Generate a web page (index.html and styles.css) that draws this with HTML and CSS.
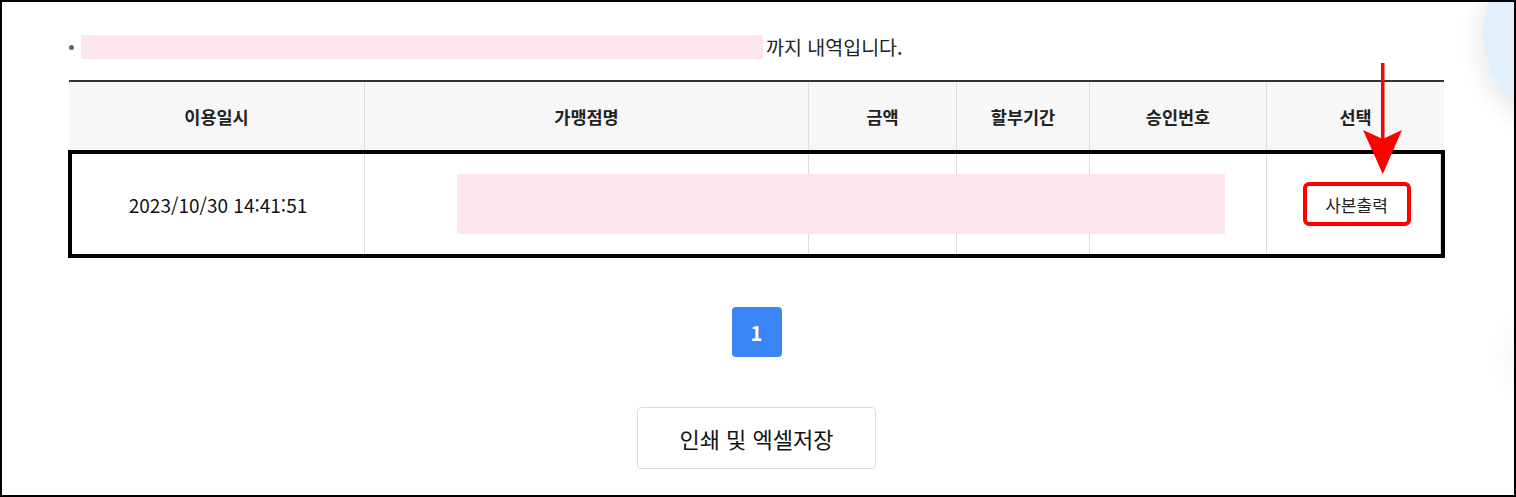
FILE: index.html
```html
<!DOCTYPE html>
<html lang="ko">
<head>
<meta charset="utf-8">
<link rel="stylesheet" href="styles.css">
</head>
<body>
<div class="frame">
  <div class="deco-circle"></div>
  <div class="deco-shadow"></div>
  <div class="page">
    <div class="notice">
      <span class="dot"></span>
      <span class="redact redact-line"></span>
      <span class="notice-text">까지 내역입니다.</span>
    </div>
    <div class="table">
      <div class="thead">
        <div class="th">이용일시</div>
        <div class="th">가맹점명</div>
        <div class="th">금액</div>
        <div class="th">할부기간</div>
        <div class="th">승인번호</div>
        <div class="th">선택</div>
      </div>
      <div class="trow">
        <div class="td">2023/10/30 14:41:51</div>
        <div class="td"></div>
        <div class="td"></div>
        <div class="td"></div>
        <div class="td"></div>
        <div class="td"><button class="copy-btn">사본출력</button></div>
        <span class="redact redact-cell"></span>
      </div>
    </div>
    <div class="pager"><span class="page-num">1</span></div>
    <div class="actions"><button class="print-btn">인쇄 및 엑셀저장</button></div>
  </div>
  <svg class="arrow" width="44" height="115" viewBox="0 0 44 115">
    <rect x="19" y="0" width="3.5" height="80" fill="#ff0000"/>
    <polygon points="1,67 20.75,76 40,67 20.75,111" fill="#ff0000"/>
  </svg>
</div>
</body>
</html>
```

FILE: styles.css
```css
* { box-sizing: border-box; }
html, body { margin: 0; padding: 0; background: #fff; }
body { font-family: "Noto Sans CJK KR", "Noto Sans", sans-serif; color: #222; }

.frame {
  position: relative;
  width: 1516px;
  height: 497px;
  border: 2px solid #000;
  overflow: hidden;
}

.deco-circle {
  position: absolute;
  left: 1481px;
  top: -64px;
  width: 190px;
  height: 190px;
  border-radius: 50%;
  background: #e1f0fa;
  box-shadow: -8px 8px 20px rgba(0,0,0,0.07);
}
.deco-shadow {
  position: absolute;
  left: 1512px;
  top: 300px;
  width: 120px;
  height: 110px;
  border-radius: 50%;
  box-shadow: -10px 0 22px rgba(0,0,0,0.035);
  background: #fff;
}

.page {
  margin-left: 67px;
  width: 1375px;
  display: flex;
  flex-direction: column;
}

.notice {
  margin-top: 33px;
  height: 24px;
  display: flex;
  align-items: center;
}
.dot {
  width: 5px;
  height: 5px;
  border-radius: 50%;
  background: #666;
  margin-right: 7px;
}
.redact { background: #fde4ef; display: block; }
.redact-line { width: 682px; height: 24px; }
.notice-text {
  margin-left: 3px;
  font-size: 19.5px;
  color: #222;
  line-height: 24px;
}

.table { margin-top: 21px; }
.thead {
  display: grid;
  grid-template-columns: 295px 444px 148px 133px 177px 178px;
  border-top: 2px solid #333;
  background: #f7f7f7;
  height: 70px;
}
.th {
  display: flex;
  align-items: center;
  justify-content: center;
  font-size: 17.5px;
  font-weight: 700;
  color: #222;
}
.th + .th { border-left: 1px solid #ddd; }

.trow {
  position: relative;
  display: grid;
  grid-template-columns: 292px 444px 148px 133px 177px 175px;
  margin-left: -1px;
  width: 1377px;
  height: 108px;
  border: 4px solid #000;
}
.td {
  display: flex;
  align-items: center;
  justify-content: center;
  font-size: 19px;
  color: #111;
}
.td + .td { border-left: 1px solid #ddd; }
.td:last-of-type { border-right: 1px solid #ddd; }
.redact-cell {
  position: absolute;
  left: 385px;
  top: 20px;
  width: 768px;
  height: 60px;
}

.copy-btn {
  width: 108px;
  height: 44px;
  margin-left: 6px;
  border: 4px solid #ff0000;
  border-radius: 6px;
  background: #fff;
  font-family: inherit;
  font-size: 17px;
  color: #222;
  padding: 0;
}

.pager {
  margin-top: 49px;
  display: flex;
  justify-content: center;
}
.page-num {
  width: 50px;
  height: 50px;
  border-radius: 4px;
  background: #3a86f6;
  color: #fff;
  font-weight: 700;
  font-size: 20px;
  display: flex;
  align-items: center;
  justify-content: center;
}

.actions {
  margin-top: 50px;
  display: flex;
  justify-content: center;
}
.print-btn {
  width: 239px;
  height: 62px;
  border: 1px solid #ddd;
  border-radius: 4px;
  background: #fff;
  font-family: inherit;
  font-size: 22px;
  color: #111;
  padding: 0;
}

.arrow {
  position: absolute;
  left: 1360px;
  top: 61px;
}
```
